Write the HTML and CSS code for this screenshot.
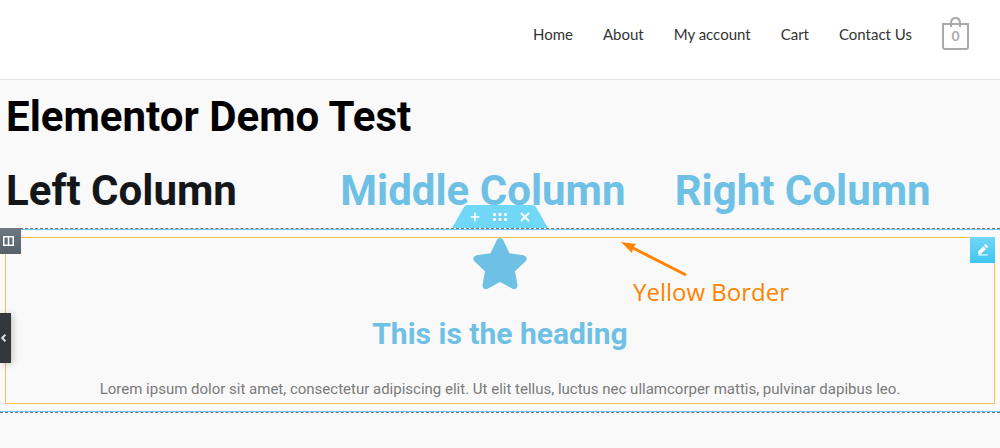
FILE: index.html
```html
<!DOCTYPE html>
<html lang="en">
<head>
    <meta charset="UTF-8">
    <meta name="viewport" content="width=device-width, initial-scale=1.0">
    <title>Elementor Demo Test</title>
    <link rel="stylesheet" href="styles.css">
</head>
<body>
    <header class="site-header">
        <nav class="main-nav">
            <a href="#">Home</a>
            <a href="#">About</a>
            <a href="#">My account</a>
            <a href="#">Cart</a>
            <a href="#">Contact Us</a>
        </nav>
        <a href="#" class="cart" aria-label="Cart, 0 items">
            <svg width="27" height="33" viewBox="0 0 27 33" fill="none" stroke="#aaa" stroke-width="2">
                <path d="M1 7H26V30Q26 32 24 32H3Q1 32 1 30Z"/>
                <path d="M9 10V5.500Q9.500 1 13.500 1Q17.500 1 18 5.500V10"/>
            </svg>
            <span class="cart-count">0</span>
        </a>
    </header>

    <main>
        <h1 class="title">Elementor Demo Test</h1>

        <div class="columns">
            <h2 class="title dark">Left Column</h2>
            <h2 class="title blue">Middle Column</h2>
            <h2 class="title blue">Right Column</h2>
        </div>

        <section class="section">
            <!-- Section toolbar -->
            <div class="section-tools">
                <svg class="tools-shape" width="96" height="23" viewBox="0 0 96 23">
                    <path d="M0 23L12 2Q13.500 0 16 0H80Q82.500 0 84 2L96 23Z" fill="#71d7f7"/>
                </svg>
                <button type="button" aria-label="Add section">
                    <svg width="10" height="10" viewBox="0 0 10 10"><path d="M5 0.500V9.500M0.500 5H9.500" stroke="#fff" stroke-width="1.700"/></svg>
                </button>
                <button type="button" aria-label="Edit section">
                    <svg width="14" height="8" viewBox="0 0 14 8" fill="#fff">
                        <rect x="0" y="0" width="3" height="3" rx="1"/><rect x="5.500" y="0" width="3" height="3" rx="1"/><rect x="11" y="0" width="3" height="3" rx="1"/>
                        <rect x="0" y="5" width="3" height="3" rx="1"/><rect x="5.500" y="5" width="3" height="3" rx="1"/><rect x="11" y="5" width="3" height="3" rx="1"/>
                    </svg>
                </button>
                <button type="button" aria-label="Delete section">
                    <svg width="10" height="10" viewBox="0 0 10 10"><path d="M1 1L9 9M9 1L1 9" stroke="#fff" stroke-width="2"/></svg>
                </button>
            </div>

            <button type="button" class="column-handle" aria-label="Edit column">
                <svg width="11" height="10" viewBox="0 0 11 10" fill="none" stroke="#fff"><path d="M0.750 0.750H10.250V9.250H0.750ZM5.500 1V9" stroke-width="1.500"/></svg>
            </button>

            <div class="widget">
                <button type="button" class="widget-edit" aria-label="Edit icon box">
                    <svg width="12" height="12" viewBox="0 0 12 12" fill="#fff"><path d="M1 7.500L6.300 2.200L9 4.900L3.700 10.200H1ZM7 1.500L7.900 0.600Q8.600 0 9.300 0.600L10.600 1.900Q11.200 2.600 10.600 3.300L9.700 4.200ZM2 10.500H11V11.500H1Z"/></svg>
                </button>
                <svg class="star" width="54" height="51" viewBox="0 0 54 51" fill="#6ec1e4">
                    <path d="M23.800 2Q27 -2 30.200 2L36.500 15.300L50.500 17.300Q55.500 19 52.800 23L42 33.300L44.500 47Q44.500 52 39.500 50.700L27 44L14.500 50.700Q9.500 52 9.500 47L12 33.300L1.200 23Q-1.500 19 3.500 17.300L17.500 15.300Z"/>
                </svg>
                <h3 class="widget-title">This is the heading</h3>
                <p class="widget-text">Lorem ipsum dolor sit amet, consectetur adipiscing elit. Ut elit tellus, luctus nec ullamcorper mattis, pulvinar dapibus leo.</p>
            </div>

            <div class="note">
                <svg width="67" height="35" viewBox="0 0 67 35">
                    <path d="M10 5L65 33" stroke="#ff8400" stroke-width="3"/>
                    <path d="M0 0L15 2L12 6L11 11Z" fill="#ff8400"/>
                </svg>
                <span>Yellow Border</span>
            </div>
        </section>
    </main>

    <button type="button" class="panel-toggle" aria-label="Hide panel">
        <svg width="5" height="8" viewBox="0 0 5 8" fill="none" stroke="#e0e1e3" stroke-width="2"><path d="M4.500 0.700L1.200 4L4.500 7.300"/></svg>
    </button>
</body>
</html>
```
FILE: styles.css
```css
/* General Styles */
* {
    box-sizing: border-box;
}

body {
    margin: 0;
    font-family: Roboto, sans-serif;
    background-color: #f9f9f9;
    color: #7a7a7a;
}

button {
    display: flex;
    align-items: center;
    justify-content: center;
    padding: 0;
    border: 0;
    background: none;
    cursor: pointer;
}

/* Header */
.site-header {
    display: flex;
    align-items: center;
    justify-content: flex-end;
    gap: 30px;
    height: 80px;
    padding: 0 31px 12px 20px;
    background: #fff;
    border-bottom: 1px solid #e6e6e6;
}

.main-nav {
    display: flex;
    gap: 30px;
    font-family: Lato, sans-serif;
    font-size: 15px;
    line-height: 24px;
}

.main-nav a {
    color: #333;
    text-decoration: none;
}

.cart {
    display: grid;
    justify-items: center;
    color: #aaa;
    text-decoration: none;
}

.cart svg,
.cart-count {
    grid-area: 1 / 1;
}

.cart-count {
    padding-top: 7px;
    font-family: Lato, sans-serif;
    font-size: 14px;
    font-weight: bold;
    line-height: 24px;
}

/* Headings */
.title {
    margin: 0;
    padding: 0 6px;
    font-size: 42px;
    font-weight: 700;
    line-height: 74px;
    color: #000;
}

.title.dark {
    color: #14171a;
}

.title.blue {
    color: #6ec1e4;
}

.columns {
    display: grid;
    grid-template-columns: repeat(3, 1fr);
    column-gap: 3px;
    white-space: nowrap;
}

/* Edited section */
.section {
    position: relative;
    padding: 8px 5px;
    border-top: 1px dashed #6d7882;
    border-bottom: 1px dashed #6d7882;
    box-shadow: inset 0 1px #71c7ea, inset 0 -1px #71c7ea;
}

.section-tools {
    position: absolute;
    bottom: 100%;
    left: 50%;
    display: flex;
    justify-content: center;
    width: 96px;
    height: 23px;
    margin-bottom: 1px;
    transform: translateX(-50%);
}

.tools-shape {
    position: absolute;
    inset: 0;
}

.section-tools button {
    position: relative;
    width: 25px;
}

.column-handle {
    position: absolute;
    top: -1px;
    left: 0;
    z-index: 1;
    width: 21px;
    height: 26px;
    padding-right: 4px;
    background: linear-gradient(#6d7882, #556068);
}

/* Widget */
.widget {
    position: relative;
    display: flex;
    flex-direction: column;
    align-items: center;
    border: 1px solid #fbc04f;
    text-align: center;
}

.widget-edit {
    position: absolute;
    top: -1px;
    right: -1px;
    width: 25px;
    height: 26px;
    background: linear-gradient(#71d7f7, #3fc5f0);
}

.widget-title {
    margin: 25px 0 21px;
    font-size: 30px;
    font-weight: 700;
    line-height: 40px;
    color: #6ec1e4;
}

.widget-text {
    margin: 0;
    font-size: 15px;
    line-height: 28px;
}

/* Annotation */
.note {
    position: absolute;
    top: 13px;
    left: 62%;
    display: flex;
    flex-direction: column;
    padding-left: 1px;
    color: #ff8400;
    font-family: "Open Sans", sans-serif;
    font-size: 24px;
    line-height: 30px;
}

.note span {
    padding-left: 12px;
}

/* Panel toggle on the left edge */
.panel-toggle {
    position: absolute;
    top: 313px;
    left: 0;
    width: 11px;
    height: 50px;
    padding-right: 4px;
    background: #34383c;
    box-shadow: 2px 1px 6px rgba(0, 0, 0, 0.2);
}
```
